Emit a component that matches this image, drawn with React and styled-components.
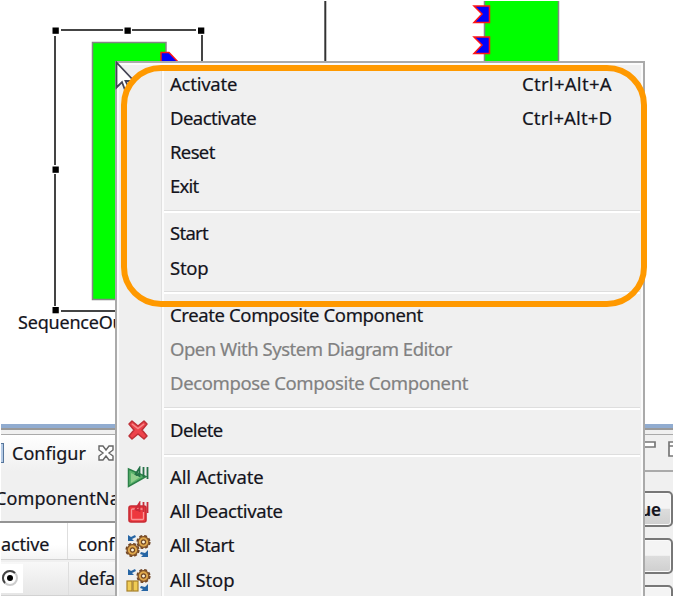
import React from "react";
import styled, { createGlobalStyle } from "styled-components";

const GlobalStyle = createGlobalStyle`
  body { margin: 0; background: #fff; overflow: hidden; }
  * { box-sizing: border-box; }
`;

const Page = styled.div`
  position: relative;
  display: flex;
  flex-direction: column;
  width: 674px;
  height: 596px;
  padding: 1px 1px 0;
  overflow: hidden;
  background: #fff;
  font-family: "Noto Sans", "Open Sans", sans-serif;
  font-size: 18px;
  color: #14141c;
  -webkit-text-stroke: 0.2px currentColor;
`;

const Workspace = styled.section`
  position: relative;
  flex: 0 0 423px;
`;

const Diagram = styled.svg`
  display: block;
  margin: -1px 0 0 -1px;
`;

const NodeLabel = styled.span`
  position: absolute;
  left: 17px;
  top: 308px;
  line-height: 26px;
  letter-spacing: -0.2px;
  font-size: 18px;
`;

const BottomPanel = styled.section`
  display: flex;
  flex: 1;
  min-height: 0;
  border-top: 4px solid #91acd0;
  background: #f0f0f0;
  box-shadow: inset 0 2px #999, inset 0 6px #f0f0f0, inset 0 7px #aaa;
  padding-top: 7px;
`;

const PanelLeft = styled.div`
  display: flex;
  flex-direction: column;
  width: 200px;
`;

const Tab = styled.div`
  display: flex;
  align-items: center;
  height: 37px;
  gap: 11px;
  background: linear-gradient(#fff, #f0f0f0);
`;

const TabEdge = styled.i`
  width: 3px;
  height: 20px;
  margin-right: -3px;
  border: 1px solid #55759b;
  border-left: 0;
  background: #b5cae4;
`;

const TabTitle = styled.span`
  letter-spacing: 0;
`;

const ComponentName = styled.div`
  height: 52px;
  margin-left: -6px;
  line-height: 55px;
  letter-spacing: 0.1px;
  border-bottom: 2px solid #949494;
`;

const TableRow = styled.div`
  display: grid;
  grid-template-columns: ${(p) => (p.$selected ? "68px" : "67px")} 1fr;
  height: ${(p) => (p.$selected ? 35 : 37)}px;
  margin-top: ${(p) => (p.$selected ? 2 : 0)}px;
  align-items: center;
  background: ${(p) => (p.$selected ? "linear-gradient(#f8f8f8, #e6e6e6)" : "linear-gradient(#fff 60%, #f4f4f4)")};
  border-bottom: 1px solid #d2d2d2;
`;

const Cell = styled.div`
  display: flex;
  align-items: center;
  height: 100%;
  padding-left: ${(p) => p.$indent}px;
  padding-top: ${(p) => (p.$header ? 7 : 0)}px;
  letter-spacing: -0.15px;
  border-right: 1px solid #dedede;
`;

const RadioCell = styled.span`
  display: flex;
  width: 22px;
  height: 29px;
  align-items: center;
  background: #fff;
`;

const PanelRight = styled.div`
  display: flex;
  flex-direction: column;
  width: 31px;
  margin-left: auto;
`;

const WindowTools = styled.div`
  height: 37px;
  flex: none;
  border-bottom: 2px solid #aaa;
`;

const ButtonStack = styled.div`
  display: flex;
  flex-direction: column;
  gap: 11px;
  padding-top: 19px;
`;

const PanelButton = styled.button`
  flex: none;
  height: 36px;
  width: 80px;
  margin-left: -49px;
  padding: 0 10px;
  border: 2px solid #777;
  border-radius: 5px;
  background: linear-gradient(#f4f4f4 48%, #dddddd 50%, #cfcfcf);
  box-shadow: inset 0 0 0 1px #fafafa;
  font: inherit;
  font-weight: 600;
  font-size: 17px;
  color: inherit;
  text-align: right;
`;

const Menu = styled.div`
  position: absolute;
  left: 115px;
  top: 61px;
  width: 530px;
  height: 535px;
  padding: 4.4px 2px 0;
  border: 2px solid #aaa;
  border-bottom: 0;
  background: linear-gradient(90deg, #efefef 44px, #e1e1e1 44px 45px, #fbfbfb 45px 47px, #f0f0f0 47px);
  box-shadow: inset 2px 2px #fbfbfb, inset -2px 0 #fbfbfb;
`;

const MenuItem = styled.div`
  display: grid;
  grid-template-columns: 36px 1fr 119px;
  align-items: center;
  height: 34.3px;
  padding-left: 1px;
  column-gap: 14px;
  white-space: nowrap;
  font-size: 18.5px;
  line-height: 26px;
  color: ${(p) => (p.$disabled ? "#818181" : "#14141c")};
`;

const MenuLabel = styled.span`
  padding-bottom: 2px;
  letter-spacing: ${(p) => p.$spacing}px;
`;

const Shortcut = styled.span`
  padding-bottom: 2px;
  letter-spacing: ${(p) => p.$spacing}px;
`;

const IconSlot = styled.span`
  display: flex;
  justify-content: center;
  padding-bottom: 1px;
`;

const Separator = styled.div`
  height: 3px;
  margin: 5.6px 1px 4px 45px;
  border-top: 1.5px solid #dedede;
  border-bottom: 2px solid #fff;
`;

const Highlight = styled.div`
  position: absolute;
  left: 121px;
  top: 65px;
  width: 526px;
  height: 242px;
  border: 6px solid #ff9900;
  border-radius: 40px;
`;

const CursorIcon = styled.svg`
  position: absolute;
  left: 115px;
  top: 61px;
`;

const DeleteIcon = () => (
  <svg width="22" height="22" viewBox="0 0 22 22">
    <path d="M2 5 5 2 11 7 17 2 20 5 15 11 20 17 17 20 11 15 5 20 2 17 7 11Z" fill="#ee434b" stroke="#bd3037" strokeWidth="1.5" strokeLinejoin="round" />
    <path d="m5 5 6 4.5L17 5" fill="none" stroke="#f58b8b" strokeWidth="1.5" />
  </svg>
);

const ActivateIcon = () => (
  <svg width="22" height="22" viewBox="0 0 22 22">
    <path d="M1.5 3 19 10.5 1.5 20.5Z" fill="#5bb36c" stroke="#2c8149" strokeWidth="1.5" />
    <path d="M4 7v10l9-6Z" fill="#91ce8d" />
    <path d="M8 9 12.5 2v9M9 9h4M16.5 1v10M20.5 1v12" fill="none" stroke="#257248" strokeWidth="1.8" />
  </svg>
);

const DeactivateIcon = () => (
  <svg width="22" height="22" viewBox="0 0 22 22">
    <rect x="2" y="5" width="17" height="16" rx="2" fill="#ee383e" stroke="#c82b34" strokeWidth="1.6" />
    <rect x="4.5" y="8" width="12" height="10.5" rx="1" fill="none" stroke="#f99596" strokeWidth="1.3" />
    <path d="M8 9 12.5 2v9M9 9h4M16.5 1v10M20.5 1v11" fill="none" stroke="#c92b39" strokeWidth="1.8" />
  </svg>
);

const Gear = ({ x, y }) => (
  <g transform={`translate(${x} ${y})`}>
    <circle r="6" fill="#dba844" stroke="#6f4526" strokeWidth="2.2" strokeDasharray="2.8 1.9" />
    <circle r="5.3" fill="#dfa84b" stroke="#84552d" strokeWidth="1.3" />
    <circle r="2.1" fill="#fff4d5" stroke="#714726" strokeWidth="1.3" />
  </g>
);

const ServiceIcon = ({ paused }) => (
  <svg width="26" height="24" viewBox="0 0 26 24">
    <path d="M3 1v6h6L7 5l4-2-1-2-4 2Z" fill="#2665a4" />
    <path d="M23 16v7h-7l2-2-3-1 1-2 4 1Z" fill="#2665a4" />
    <Gear x={18.5} y={8} />
    {paused ? (
      <g fill="#f0cc55" stroke="#a78029" strokeWidth="1.2">
        <rect x="2" y="13" width="5" height="10" />
        <rect x="8" y="13" width="5" height="10" />
      </g>
    ) : (
      <Gear x={7.5} y={16} />
    )}
  </svg>
);

const groups = [
  [
    { label: "Activate", spacing: -0.24, keys: "Ctrl+Alt+A", keySpacing: 0.28 },
    { label: "Deactivate", spacing: -0.55, keys: "Ctrl+Alt+D", keySpacing: 0.15 },
    { label: "Reset", spacing: -0.65 },
    { label: "Exit", spacing: -0.8 },
  ],
  [
    { label: "Start", spacing: -0.7 },
    { label: "Stop", spacing: -0.27 },
  ],
  [
    { label: "Create Composite Component", spacing: -0.38 },
    { label: "Open With System Diagram Editor", spacing: -0.48, disabled: true },
    { label: "Decompose Composite Component", spacing: -0.38, disabled: true },
  ],
  [{ label: "Delete", spacing: -0.6, icon: <DeleteIcon /> }],
  [
    { label: "All Activate", spacing: -0.13, icon: <ActivateIcon /> },
    { label: "All Deactivate", spacing: -0.37, icon: <DeactivateIcon /> },
    { label: "All Start", spacing: -0.4, icon: <ServiceIcon /> },
    { label: "All Stop", spacing: -0.15, icon: <ServiceIcon paused /> },
  ],
];

const handles = [[52.5, 27.5], [124.5, 27.5], [198, 27.5], [52.5, 166.5], [52.5, 307]];

const DiagramCanvas = () => (
  <Diagram width="673" height="423" viewBox="0 0 673 423">
    <path d="M55 36V165M55 174V306M61 30H123M132 30H196M202 35V64M61 311H116" fill="none" stroke="#444" strokeWidth="2" />
    {handles.map(([x, y]) => (
      <rect key={`${x}-${y}`} x={x} y={y} width="6.3" height="6.3" fill="#000" />
    ))}
    <rect x="92.5" y="42.5" width="73.5" height="257" fill="#00ff00" stroke="#858585" strokeWidth="1.5" />
    <path d="M161 64V52.5h8l10 10.5" fill="#0000ff" stroke="#ff1616" strokeWidth="1.5" />
    <path d="M325.3 1V64" stroke="#333" strokeWidth="2" />
    <path d="M484.5 1V64H558.5V1" fill="#00ff00" stroke="#858585" strokeWidth="1.5" />
    {[6, 37].map((y) => (
      <path key={y} d={`M474 ${y}H489.5V${y + 16.5}H474L482 ${y + 8}Z`} fill="#0000ff" stroke="#ff1616" strokeWidth="1.5" />
    ))}
  </Diagram>
);

const Item = ({ label, spacing, keys, keySpacing, icon, disabled }) => (
  <MenuItem $disabled={disabled}>
    <IconSlot>{icon}</IconSlot>
    <MenuLabel $spacing={spacing}>{label}</MenuLabel>
    {keys && <Shortcut $spacing={keySpacing}>{keys}</Shortcut>}
  </MenuItem>
);

export default function App() {
  return (
    <>
      <GlobalStyle />
      <Page>
        <Workspace>
          <DiagramCanvas />
          <NodeLabel>SequenceOu</NodeLabel>
        </Workspace>
        <BottomPanel>
          <PanelLeft>
            <Tab>
              <TabEdge />
              <TabTitle>Configur</TabTitle>
              <svg width="18" height="18" viewBox="0 0 18 18">
                <path d="M2 2h4l3 4 3-4h4v4l-4 3 4 3v4h-4l-3-4-3 4H2v-4l4-3-4-3Z" fill="#fff" stroke="#666" strokeWidth="1.4" />
              </svg>
            </Tab>
            <ComponentName>ComponentNa</ComponentName>
            <TableRow>
              <Cell $header $indent={0}>active</Cell>
              <Cell $header $indent={10}>conf</Cell>
            </TableRow>
            <TableRow $selected>
              <Cell $indent={0}>
                <RadioCell>
                  <svg width="18" height="18" viewBox="0 0 18 18">
                    <circle cx="9" cy="9" r="7" fill="#fff" stroke="#ccc" strokeWidth="2" />
                    <path d="M4 14A7 7 0 1 1 14 4" fill="none" stroke="#444" strokeWidth="2" />
                    <circle cx="9" cy="9" r="3" fill="#000" />
                  </svg>
                </RadioCell>
              </Cell>
              <Cell $indent={9}>defa</Cell>
            </TableRow>
          </PanelLeft>
          <PanelRight>
            <WindowTools>
              <svg width="31" height="34" viewBox="0 0 31 34">
                <path d="M-3 7H13V12H-3M40 7H27V21H40M27 11H40" fill="#fff" stroke="#777" strokeWidth="1.7" />
              </svg>
            </WindowTools>
            <ButtonStack>
              <PanelButton>ue</PanelButton>
              <PanelButton />
              <PanelButton />
            </ButtonStack>
          </PanelRight>
        </BottomPanel>
        <Menu>
          {groups.map((items, index) => (
            <React.Fragment key={items[0].label}>
              {index > 0 && <Separator />}
              {items.map((item) => (
                <Item key={item.label} {...item} />
              ))}
            </React.Fragment>
          ))}
        </Menu>
        <CursorIcon width="24" height="32" viewBox="0 0 24 32">
          <path d="M1.5 1.5V26.5L7 21 10 29 14 27 10.5 20H19Z" fill="#fff" stroke="#444455" strokeWidth="1.8" />
        </CursorIcon>
        <Highlight />
      </Page>
    </>
  );
}
